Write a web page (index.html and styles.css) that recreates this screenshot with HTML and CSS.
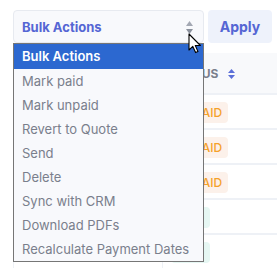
FILE: index.html
```html
<!DOCTYPE html>
<html lang="en">
<head>
  <meta charset="UTF-8" />
  <title>Invoices - Bulk Actions</title>
  <link rel="stylesheet" href="styles.css">
</head>
<body>

  <div class="toolbar">
    <div class="select">
      <span>Bulk Actions</span>
      <svg class="select-arrows" width="7" height="13" viewBox="0 0 7 13">
        <path d="M3.5 0 L7 5 L0 5 Z" fill="#a3a8b3"/>
        <path d="M0 8 L7 8 L3.5 13 Z" fill="#8a909c"/>
      </svg>
    </div>
    <button class="apply">Apply</button>

    <ul class="dropdown">
      <li class="active">Bulk Actions</li>
      <li>Mark paid</li>
      <li>Mark unpaid</li>
      <li>Revert to Quote</li>
      <li>Send</li>
      <li>Delete</li>
      <li>Sync with CRM</li>
      <li>Download PDFs</li>
      <li>Recalculate Payment Dates</li>
    </ul>

    <svg class="cursor" width="14" height="21" viewBox="0 0 14 21">
      <path d="M1 1 L1 17 L4.8 13.4 L7.6 19.6 L10 18.6 L7.3 12.5 L12.4 12.5 Z" fill="#fff" stroke="#000" stroke-width="1.1" stroke-linejoin="round"/>
    </svg>
  </div>

  <table class="invoices">
    <thead>
      <tr>
        <th class="col-client">Client</th>
        <th class="col-status">
          Status
          <svg class="sort" width="7" height="10" viewBox="0 0 7 10">
            <path d="M3.5 0 L7 4 L0 4 Z M0 6 L7 6 L3.5 10 Z" fill="#5b6fd8"/>
          </svg>
        </th>
      </tr>
    </thead>
    <tbody>
      <tr><td></td><td><span class="badge unpaid">UNPAID</span></td></tr>
      <tr><td></td><td><span class="badge unpaid">UNPAID</span></td></tr>
      <tr><td></td><td><span class="badge unpaid">UNPAID</span></td></tr>
      <tr><td></td><td><span class="badge paid">PAID</span></td></tr>
      <tr><td></td><td><span class="badge paid">PAID</span></td></tr>
    </tbody>
  </table>

</body>
</html>
```

FILE: styles.css
```css
body {
  font-family: 'Inter', sans-serif;
  background-color: #fff;
  margin: 0;
  color: #333;
  overflow: hidden;
}

.toolbar {
  position: relative;
  display: flex;
  gap: 4px;
  padding: 10px 0 0 13px;
}

.select {
  width: 191px;
  height: 33px;
  box-sizing: border-box;
  border: 1px solid #e7eaf0;
  border-radius: 4px;
  background-color: #f8f9fc;
  display: flex;
  align-items: center;
  justify-content: space-between;
  padding: 0 10px 0 8px;
  font-size: 13px;
  font-weight: 700;
  color: #5566d4;
}

.select-arrows {
  margin-top: 1px;
}

.apply {
  width: 64px;
  height: 33px;
  border: none;
  border-radius: 4px;
  background-color: #eef2fb;
  color: #5566d4;
  font-family: 'Inter', sans-serif;
  font-size: 14px;
  font-weight: 700;
  padding: 0;
}

.dropdown {
  position: absolute;
  top: 43px;
  left: 13px;
  width: 191px;
  box-sizing: border-box;
  margin: 0;
  padding: 0;
  list-style: none;
  background-color: #f8f9fc;
  border: 1px solid #767676;
  z-index: 10;
}

.dropdown li {
  height: 24px;
  line-height: 24px;
  padding-left: 8px;
  font-size: 13px;
  color: #7a7f8c;
}

.dropdown li.active {
  height: 25px;
  line-height: 25px;
  background-color: #2c68d0;
  color: #fff;
  font-weight: 600;
}

.cursor {
  position: absolute;
  top: 33px;
  left: 188px;
  z-index: 20;
}

.invoices {
  margin: 10px 0 0 13px;
  width: 264px;
  border-collapse: collapse;
  border-left: 1px solid #eef1f6;
}

.invoices th {
  height: 40px;
  padding: 0 0 0 8px;
  background-color: #f8f9fb;
  border-bottom: 2px solid #eef1f6;
  text-align: left;
  font-size: 12px;
  font-weight: 700;
  text-transform: uppercase;
  color: #7a7f8c;
}

.col-client {
  width: 140px;
  border-right: 1px solid #eef1f6;
}

.sort {
  margin-left: 7px;
  vertical-align: -1px;
}

.invoices td {
  height: 33px;
  padding: 0 0 0 8px;
  border-bottom: 2px solid #eef1f6;
}

.invoices td:first-child {
  border-right: 1px solid #eef1f6;
}

.badge {
  display: inline-block;
  padding: 3px 6px;
  border-radius: 4px;
  font-size: 12px;
  font-weight: 500;
}

.badge.unpaid {
  background-color: #fcf1ea;
  color: #f5a12a;
}

.badge.paid {
  background-color: #e6f7f3;
  color: #3cc4d8;
}
```
